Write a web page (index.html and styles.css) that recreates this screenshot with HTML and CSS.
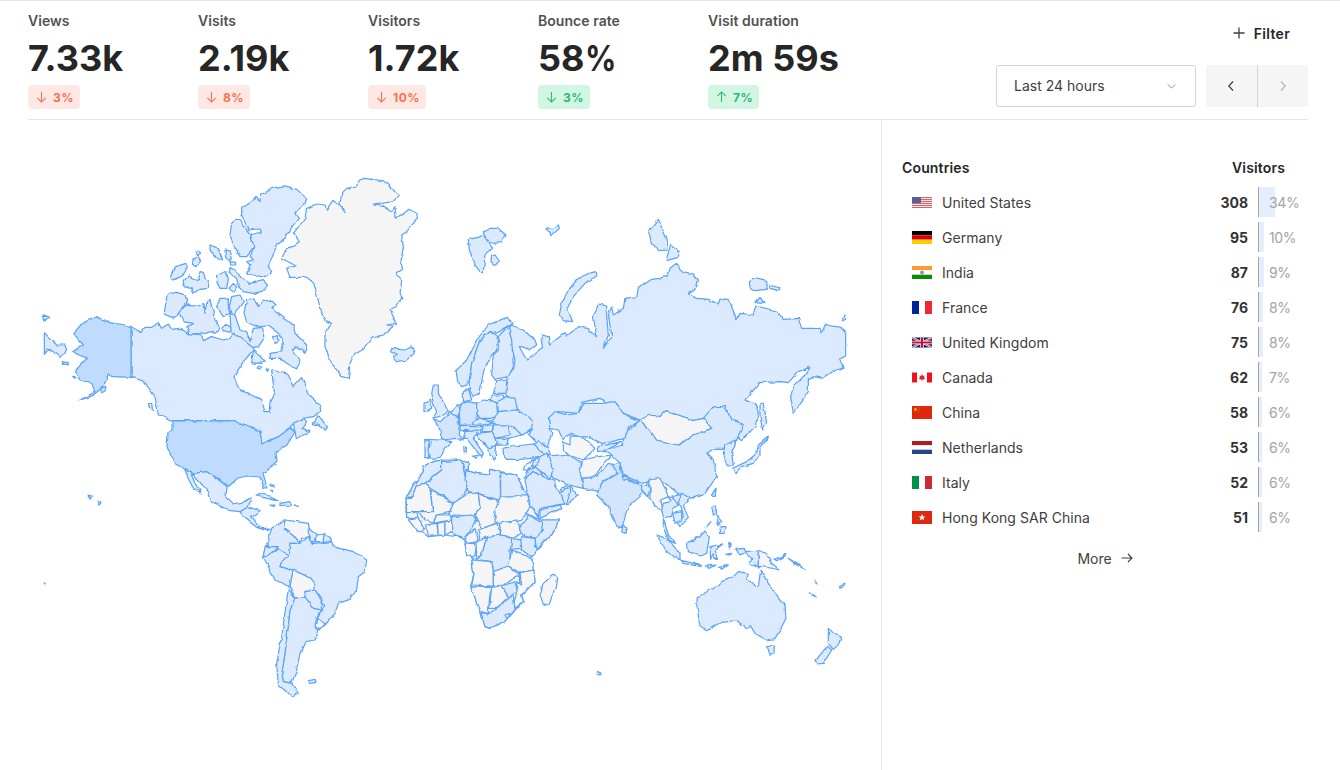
FILE: index.html
```html
<!DOCTYPE html>
<html lang="en">
<head>
<meta charset="utf-8">
<title>Countries</title>
<link rel="stylesheet" href="styles.css">
</head>
<body>
<header class="top">
  <div class="stats">
    <div class="stat"><div class="label">Views</div><div class="value">7.33k</div>
      <div class="badge bad"><svg class="arr" viewBox="0 0 12 14"><path d="M6 1.5V12.500M1.500 8L6 12.500 10.500 8"/></svg>3%</div></div>
    <div class="stat"><div class="label">Visits</div><div class="value">2.19k</div>
      <div class="badge bad"><svg class="arr" viewBox="0 0 12 14"><path d="M6 1.5V12.500M1.500 8L6 12.500 10.500 8"/></svg>8%</div></div>
    <div class="stat"><div class="label">Visitors</div><div class="value">1.72k</div>
      <div class="badge bad"><svg class="arr" viewBox="0 0 12 14"><path d="M6 1.5V12.500M1.500 8L6 12.500 10.500 8"/></svg>10%</div></div>
    <div class="stat"><div class="label">Bounce rate</div><div class="value">58<span class="sign">%</span></div>
      <div class="badge good"><svg class="arr" viewBox="0 0 12 14"><path d="M6 1.5V12.500M1.500 8L6 12.500 10.500 8"/></svg>3%</div></div>
    <div class="stat"><div class="label">Visit duration</div><div class="value">2m 59s</div>
      <div class="badge good"><svg class="arr" viewBox="0 0 12 14"><path d="M6 12.500V1.500M1.500 6L6 1.500 10.500 6"/></svg>7%</div></div>
  </div>
  <div class="controls">
    <div class="filter"><svg class="plus" viewBox="0 0 12 12"><path d="M6 .5V11.500M.5 6H11.500"/></svg>Filter</div>
    <div class="range">
      <div class="select"><span class="seltext">Last 24 hours</span><svg class="caret" viewBox="0 0 10 6"><path d="M.5 .5L5 5 9.5 .5"/></svg></div>
      <div class="nav">
        <div class="navbtn"><svg class="chev" viewBox="0 0 6 10"><path d="M5 .5L.8 5 5 9.5"/></svg></div>
        <div class="navbtn off"><svg class="chev" viewBox="0 0 6 10"><path d="M1 .5L5.200 5 1 9.5"/></svg></div>
      </div>
    </div>
  </div>
</header>
<main class="main">
  <section class="mapwrap">
    <svg class="map" viewBox="28 120 853 650" aria-label="World map">
      <defs>
        <filter id="rough" filterUnits="userSpaceOnUse" x="28" y="120" width="853" height="650" color-interpolation-filters="sRGB">
          <feTurbulence type="fractalNoise" baseFrequency=".13" numOctaves="2" seed="4" result="n"/>
          <feDisplacementMap in="SourceGraphic" in2="n" scale="3.500" xChannelSelector="R" yChannelSelector="G"/>
        </filter>
      </defs>
      <g filter="url(#rough)">
      <!-- North America, Greenland -->
      <g transform="translate(30 170) scale(.33333)">
        <polygon class="c0" points="1000,25 1060,32 1105,75 1090,95 1030,105 1065,110 1085,125 1095,110 1098,145 1135,118 1160,128 1162,145 1130,185 1115,195 1120,230 1112,280 1118,298 1100,310 1115,330 1110,370 1115,385 1095,410 1080,420 1100,460 1070,465 1090,468 1060,495 1025,505 1000,535 975,550 960,580 955,625 935,620 905,580 885,530 885,490 905,460 885,452 875,430 850,335 830,322 780,322 770,295 798,288 755,265 765,245 808,215 790,190 825,145 830,115 860,102 885,105 890,118 908,92 930,105 945,128 930,100 935,70 950,55 980,48 985,35"/>
        <polygon class="c1" points="1085,535 1105,538 1125,540 1145,530 1153,550 1130,570 1100,575 1090,565 1100,555 1082,545"/>
        <polygon class="c1" points="692,75 730,55 760,47 800,58 830,85 825,105 795,130 805,145 780,180 765,205 740,222 735,240 715,290 725,305 705,322 670,315 650,310 660,285 650,275 670,270 660,258 675,230 660,195 695,185 690,177 655,180 635,135 635,115 665,95 680,80 690,95"/>
        <polygon class="c1" points="615,148 630,148 640,170 660,190 668,215 675,230 650,260 630,260 615,235 600,195 605,160"/>
        <polygon class="c1" points="540,225 565,235 578,270 555,258 540,240"/>
        <polygon class="c1" points="585,240 600,243 607,265 597,272 587,262"/>
        <polygon class="c1" points="600,275 617,277 617,285 602,285"/>
        <polygon class="c1" points="495,245 505,240 512,250 500,257"/>
        <polygon class="c1" points="490,268 505,263 512,275 498,287 487,280"/>
        <polygon class="c1" points="437,290 468,280 468,300 455,322 430,332 423,325"/>
        <polygon class="c1" points="475,317 490,325 505,330 510,308 520,310 525,325 538,330 535,355 510,358 488,370 483,355 462,350 460,335"/>
        <polygon class="c1" points="560,315 585,308 595,325 590,355 570,355 560,335"/>
        <polygon class="c1" points="610,340 620,352 608,365 597,355"/>
        <polygon class="c1" points="600,293 615,300 635,325 660,340 700,332 712,345 705,362 670,370 640,365 625,350 620,325 597,310"/>
        <polygon class="c1" points="412,372 440,367 465,375 470,392 440,440 430,447 403,430 408,395"/>
        <polygon class="c1" points="448,430 470,400 480,407 505,408 522,400 525,430 530,395 540,390 548,420 555,450 570,470 560,490 530,485 510,490 480,492 470,470 490,460 460,455"/>
        <polygon class="c1" points="570,385 595,385 595,410 600,430 580,440 560,410"/>
        <polygon class="c1" points="605,380 630,375 640,395 625,415 605,435 598,410"/>
        <polygon class="c1" points="590,463 605,475 600,490 580,485 578,475"/>
        <polygon class="c1" points="650,388 670,385 685,410 700,390 725,395 735,405 722,415 750,435 790,465 795,490 830,525 825,550 800,530 790,540 810,570 800,597 770,580 750,565 722,565 720,550 755,545 760,520 745,490 715,468 680,470 650,455 642,430"/>
        <polygon class="c1" points="670,540 680,550 705,573 680,580 665,578"/>
        <polygon class="c1" points="685,588 697,588 690,597 682,595"/>
        <polygon class="c1" points="708,597 716,597 712,604"/>
        <polygon class="c1" points="728,500 742,498 744,515 732,520"/>
        <polygon class="c1" points="600,430 615,435 630,480 650,485 660,515 670,475 698,472 702,505 685,530 665,532 640,520 610,505 603,480"/>
        <polygon class="c1" points="303,470 333,487 345,472 365,472 385,460 395,475 415,462 425,478 450,475 480,492 515,495 520,512 545,500 580,510 600,505 612,490 640,510 665,530 670,540 640,575 612,620 625,655 660,675 695,688 705,725 718,725 720,695 733,665 725,600 770,612 790,650 815,622 835,675 870,705 872,725 850,740 820,745 795,758 780,770 795,785 745,800 695,822 690,780 650,765 600,752 425,752 400,738 385,735 375,680 340,632 303,622"/>
        <polygon class="c1" points="850,760 865,735 875,750 892,770 885,778 870,768"/>
        <polygon class="c1" points="790,760 820,745 830,755 815,775 840,785 800,805 795,785"/>
        <polygon class="c1" points="355,700 365,700 368,722 358,712"/>
        <polygon class="c2" points="303,470 285,465 240,458 200,440 155,462 130,490 160,525 125,545 170,565 138,600 150,630 185,640 195,665 145,693 190,675 220,650 235,612 250,620 303,622"/>
        <polygon class="c1" points="43,488 80,525 105,525 110,540 90,565 70,545 55,540 43,553"/>
        <polygon class="c1" points="42,435 58,442 45,450"/>
        <polygon class="c1" points="97,575 115,578 118,585 98,580"/>
        <polygon class="c1" points="128,622 138,622 135,628"/>
        <polygon class="c1" points="212,658 228,652 226,662 215,668"/>
      </g>
      <polygon class="c2" points="172,421 230,421 247,425 260,432 262,444 278,437 290,428 295,432 287,445 276,452 277,461 268,470 263,473 267,488 264,488 260,477 247,476 238,478 228,487 217,478 207,472 193,473 185,469 175,463 167,447 168,433 172,430"/>
      <polygon class="c1" points="43,315 50,318 45,321"/>
      <polygon class="c1" points="88,496 92,497 90,499"/>
      <polygon class="c1" points="97,501 101,503 99,505"/>
      <polygon class="c1" points="44,583 45,583 45,584"/>
      <!-- Central and South America -->
      <g transform="translate(150 440) scale(.33333)">
        <polygon class="c1" points="105,88 130,100 170,95 200,115 232,140 228,165 250,195 275,190 303,172 295,200 270,215 240,212 185,185 175,155 130,105"/>
        <polygon class="c1" points="105,90 120,95 135,130 155,160 130,145 112,110"/>
        <polygon class="c1" points="270,215 295,200 330,215 305,232 330,265 360,268 350,272 320,262 280,230"/>
        <polygon class="c1" points="318,168 340,160 390,185 365,178"/>
        <polygon class="c1" points="390,190 420,185 425,195 390,197"/>
        <polygon class="c1" points="362,195 375,195 372,200"/>
        <polygon class="c1" points="435,195 445,195 445,199"/>
        <polygon class="c1" points="358,135 370,135 368,140"/>
        <polygon class="c1" points="362,150 368,152 365,156"/>
        <polygon class="c1" points="475,722 495,718 498,728 478,730"/>
        <polygon class="c0" points="405,240 440,245 475,250 480,270 475,290 455,295 450,310 430,285 400,265"/>
        <polygon class="c1" points="475,265 500,285 490,310 475,290"/>
        <polygon class="c0" points="497,285 522,282 520,303 497,305"/>
        <polygon class="c1" points="522,282 540,292 545,300 520,305"/>
        <polygon class="c1" points="405,240 400,265 430,285 450,310 420,310 415,345 385,330 350,315 365,265"/>
        <polygon class="c1" points="345,320 385,320 350,350 340,345"/>
        <polygon class="c1" points="350,350 385,325 415,345 395,365 390,380 430,390 420,440 375,420 340,350"/>
        <polygon class="c1" points="420,310 450,310 475,290 490,310 545,305 550,320 610,335 650,360 645,395 625,410 620,450 600,478 565,490 555,520 525,555 500,535 525,495 495,450 480,415 430,390 390,380 395,365 415,345"/>
        <polygon class="c0" points="430,388 480,415 495,435 495,450 465,455 465,470 435,475 420,440"/>
        <polygon class="c1" points="465,455 495,450 520,490 510,510 490,505 465,475"/>
        <polygon class="c0" points="500,535 527,552 510,570 495,560"/>
        <polygon class="c1" points="435,475 465,470 490,505 510,510 500,535 495,560 505,575 495,600 465,605 450,640 440,690 425,730 400,725 395,700 405,640 420,510"/>
        <polygon class="c1" points="415,445 435,475 420,510 405,640 395,700 400,725 425,730 445,760 425,768 385,735 380,670 395,590"/>
      </g>
      <!-- Eurasia -->
      <g transform="translate(430 200) scale(.33333)">
        <polygon class="c1" points="115,118 145,112 160,105 188,145 165,165 160,215 150,215 135,195 118,150"/>
        <polygon class="c1" points="160,95 180,85 205,85 228,105 215,128 190,130 170,120"/>
        <polygon class="c1" points="185,168 195,165 208,183 195,195 183,185"/>
        <polygon class="c1" points="345,85 375,82 385,75 388,85 365,107 358,95"/>
        <polygon class="c1" points="500,215 500,228 465,250 430,290 412,325 428,365 400,362 388,345 395,310 415,270 445,235 480,218"/>
        <polygon class="c1" points="655,95 685,58 712,120 712,150 690,152 665,130"/>
        <polygon class="c1" points="722,133 748,155 745,172 708,182"/>
        <polygon class="c1" points="958,245 975,235 1010,245 1012,268 975,272 960,262"/>
        <polygon class="c1" points="1018,255 1050,265 1040,272 1020,265"/>
        <polygon class="c1" points="978,305 990,292 1002,308"/>
        <polygon class="c1" points="1237,355 1245,345 1247,358 1240,362"/>
        <polygon class="c1" points="240,378 280,390 315,420 320,435 300,450 275,440 268,440 290,480 320,455 340,440 335,405 355,410 358,435 405,398 410,408 445,380 470,385 500,410 490,350 505,312 530,318 530,345 535,405 520,445 545,410 535,345 545,318 550,345 580,325 585,295 620,290 625,265 665,238 690,235 715,225 720,205 740,190 760,215 790,222 805,240 800,260 775,285 800,295 835,298 865,312 870,297 895,302 905,320 920,358 930,340 970,345 978,318 1040,333 1060,358 1105,355 1115,385 1170,385 1175,400 1185,375 1235,382 1247,395 1247,465 1228,475 1242,505 1215,510 1180,535 1150,530 1135,540 1135,575 1110,610 1090,642 1082,590 1090,560 1125,525 1140,502 1105,515 1075,548 1050,545 990,548 945,600 975,612 985,640 975,680 935,722 920,710 940,672 905,660 885,620 850,620 835,655 820,655 790,662 745,645 705,635 690,650 630,660 580,640 555,608 530,615 510,595 455,607 445,640 385,635 355,655 365,700 352,742 322,730 295,702 305,690 280,695 250,665 235,640 250,610 225,575 235,540 225,530 250,510 255,480 240,420"/>
        <polygon class="c1" points="990,610 1000,610 1010,665 998,690 990,650"/>
        <polygon class="c1" points="985,735 1015,710 1012,720 990,740 990,770 970,790 935,800 915,820 908,805 950,785 980,760"/>
        <polygon class="c1" points="75,515 110,480 140,420 175,375 230,352 250,375 235,378 200,400 180,395 150,420 125,490 120,540 110,555 95,560 80,545"/>
        <polygon class="c1" points="125,490 150,420 180,395 202,410 200,450 185,465 160,515 150,580 130,590 118,570 118,540"/>
        <polygon class="c1" points="205,410 235,378 245,420 250,500 235,530 195,538 185,525 190,465 205,450"/>
        <polygon class="c1b" points="630,660 660,690 680,720 745,735 790,705 845,685 820,655 850,620 885,620 905,660 940,672 920,720 880,745 855,745 830,760 850,780 860,830 825,880 780,895 750,885 700,845 680,840 635,850 580,825 570,790 540,760 520,750 580,735 580,700 610,680"/>
        <polygon class="c0" points="630,660 660,645 690,650 705,635 745,645 790,662 820,655 845,685 790,705 745,735 680,720 660,690"/>
        <polygon class="c1" points="885,735 920,720 905,760 910,795 890,795 880,760"/>
        <polygon class="c1" points="845,885 858,865 855,890"/>
      </g>
      <!-- Central and South Asia -->
      <g transform="translate(540 400) scale(.33333)">
        <polygon class="c1" points="25,55 45,35 80,45 115,40 130,10 185,10 225,5 250,40 298,62 265,85 255,115 215,125 185,130 155,115 90,100 70,120 55,90 30,85"/>
        <polygon class="c0" points="70,125 90,135 90,105 125,110 165,145 130,180 85,165 70,150"/>
        <polygon class="c1" points="5,155 40,170 85,165 120,185 125,235 130,265 85,255 40,235 15,195"/>
        <polygon class="c0" points="125,180 175,170 215,165 190,190 165,230 125,235 118,210"/>
        <polygon class="c1" points="125,235 170,230 205,190 225,195 240,220 185,245 180,275 130,265"/>
        <polygon class="c1" points="175,140 245,125 200,150 170,155"/>
        <polygon class="c3" points="215,195 240,190 245,225 300,255 325,260 330,235 300,290 265,320 245,385 230,375 205,320 170,285 185,250 235,220"/>
        <polygon class="c1" points="248,228 290,250 300,250 250,240"/>
        <polygon class="c1" points="250,375 258,385 255,400 245,395"/>
        <polygon class="c1" points="305,255 330,262 325,290 305,270"/>
        <polygon class="c0" points="330,240 360,235 375,265 385,290 362,300 370,335 345,320 330,295"/>
        <polygon class="c1" points="65,265 90,255 112,285 85,310 60,315"/>
        <polygon class="c1" points="0,330 60,315 65,325 0,355"/>
      </g>
      <!-- Africa and Arabia -->
      <g transform="translate(400 460) scale(.33333)">
        <polygon class="c0" points="100,5 125,0 185,0 205,5 205,30 200,32 230,40 265,45 270,28 300,35 350,45 380,108 390,140 420,180 475,180 465,210 410,270 395,290 400,330 405,365 365,405 370,425 345,450 320,480 270,505 255,500 243,458 212,378 222,345 215,300 195,250 195,235 170,230 135,225 85,230 65,215 45,205 18,160 18,115 40,75 70,35 70,20"/>
        <polygon class="c1" points="100,5 125,0 125,30 75,70 50,75 35,115 18,115 40,75 70,35 70,20"/>
        <polygon class="c1" points="125,5 185,0 195,45 205,65 198,95 165,130 90,85 75,70 125,30"/>
        <polygon class="c1" points="185,0 205,5 205,25 195,45"/>
        <polygon class="c1" points="198,32 230,40 265,45 270,28 300,35 302,122 235,100 205,95 195,60"/>
        <polygon class="c1" points="302,38 350,45 380,108 302,108"/>
        <polygon class="c0" points="18,115 35,115 50,75 75,70 90,85 98,155 50,155 25,155 22,170 20,155"/>
        <polygon class="c0" points="92,87 160,130 160,155 110,165 100,190 75,180 55,155 98,155"/>
        <polygon class="c0" points="160,130 210,97 235,100 240,140 225,168 165,165 145,168"/>
        <polygon class="c0" points="235,100 295,125 290,155 282,170 290,190 245,205 225,168 240,140"/>
        <polygon class="c0" points="302,108 380,108 390,140 380,160 358,185 350,180 345,200 305,195 285,185 285,155 295,125"/>
        <polygon class="c0" points="298,190 350,180 365,215 340,235 305,225"/>
        <polygon class="c1" points="385,165 420,185 445,180 430,210 405,235 370,228 358,205"/>
        <polygon class="c1" points="425,180 475,180 465,210 410,270 405,235 430,210"/>
        <polygon class="c1" points="365,230 405,235 408,270 395,290 365,270 360,240"/>
        <polygon class="c0" points="378,160 392,140 420,180 410,175"/>
        <polygon class="c0" points="20,155 50,155 55,175 20,175"/>
        <polygon class="c0" points="25,180 55,175 75,205 65,215 45,205"/>
        <polygon class="c0" points="80,195 110,190 115,225 85,230"/>
        <polygon class="c0" points="112,190 135,185 135,225 115,225"/>
        <polygon class="c0" points="135,185 155,180 155,215 135,225"/>
        <polygon class="c0" points="100,190 110,165 150,165 155,180 125,185"/>
        <polygon class="c1" points="155,170 215,165 230,180 220,200 195,235 170,230 155,215"/>
        <polygon class="c0" points="195,235 225,205 235,240 240,245 200,250"/>
        <polygon class="c0" points="195,250 230,250 225,285 215,290 200,285"/>
        <polygon class="c0" points="228,248 260,232 245,285 230,295"/>
        <polygon class="c0" points="235,210 290,190 305,225 260,230 240,240"/>
        <polygon class="c1" points="260,232 305,225 340,238 330,270 330,300 322,340 280,335 275,305 245,300 215,295 230,295 245,285"/>
        <polygon class="c1" points="335,238 362,235 365,265 332,268"/>
        <polygon class="c0" points="335,270 395,295 400,330 360,338 325,318 330,298"/>
        <polygon class="c0" points="215,300 275,305 280,335 280,378 215,375 222,345"/>
        <polygon class="c0" points="280,335 325,318 360,345 345,350 310,375 280,378"/>
        <polygon class="c0" points="360,335 368,340 370,370 358,360"/>
        <polygon class="c0" points="360,338 402,330 405,365 365,405 370,425 345,445 340,430 355,390 350,365 365,375"/>
        <polygon class="c0" points="212,378 280,380 270,400 265,460 240,455"/>
        <polygon class="c0" points="275,382 305,378 325,410 290,445 268,445"/>
        <polygon class="c1" points="305,378 345,365 352,395 325,410"/>
        <polygon class="c1" points="243,458 265,462 290,445 320,420 340,405 345,450 320,480 270,505 255,500"/>
        <polygon class="c0" points="315,465 330,460 322,478"/>
        <polygon class="c0" points="462,342 470,352 465,385 448,432 430,437 420,405 430,370"/>
        <polygon class="c1" points="372,55 385,30 412,20 430,50 395,35"/>
        <polygon class="c1" points="375,60 395,35 430,50 460,60 480,100 505,105 495,130 420,145 415,170 385,115"/>
        <polygon class="c1" points="480,100 510,80 512,95 500,130 495,130"/>
      </g>
      <!-- Europe -->
      <g transform="translate(400 370) scale(.33333)">
        <polygon class="c1" points="175,140 150,130 185,100 230,100 270,90 352,120 365,195 325,205 320,225 290,225 265,235 245,215 230,190 195,185 178,170"/>
        <polygon class="c1" points="100,45 115,45 115,70 135,105 145,125 130,135 100,145 110,125 100,100 95,70"/>
        <polygon class="c1" points="72,100 92,88 95,115 72,125"/>
        <polygon class="c3" points="120,155 140,140 150,125 175,140 178,170 175,190 190,210 170,205 125,210 125,185 100,145"/>
        <polygon class="c1" points="75,208 125,210 155,215 135,235 120,262 90,265 78,235"/>
        <polygon class="c1" points="75,208 90,215 85,265 75,262"/>
        <polygon class="c3" points="185,100 205,95 230,100 232,150 215,165 180,165 178,125"/>
        <polygon class="c1" points="150,130 175,105 180,125 175,140"/>
        <polygon class="c1" points="190,65 205,55 215,90 190,95"/>
        <polygon class="c1" points="230,100 250,90 290,95 293,145 240,145 230,130"/>
        <polygon class="c1" points="275,75 310,75 322,90 292,95 270,90"/>
        <polygon class="c1" points="290,35 320,30 318,70 280,70"/>
        <polygon class="c1" points="292,95 320,80 345,85 352,120 295,125"/>
        <polygon class="c1" points="295,125 352,120 400,150 395,175 365,195 345,175 325,165 270,165 285,145"/>
        <polygon class="c1" points="218,155 240,145 280,155 250,165 220,165"/>
        <polygon class="c1" points="180,170 220,170 250,170 245,180 180,182"/>
        <polygon class="c1" points="250,165 285,160 275,185 245,185"/>
        <polygon class="c1" points="285,165 325,165 328,195 285,205 275,185"/>
        <polygon class="c1" points="285,205 325,205 320,225 290,225"/>
        <polygon class="c1" points="195,185 235,180 220,205 250,250 245,262 215,225 200,205 190,205"/>
        <polygon class="c1" points="220,258 240,255 232,265"/>
        <polygon class="c1" points="192,228 200,228 198,248 192,248"/>
        <polygon class="c1" points="230,190 275,185 285,205 290,225 265,235 245,215"/>
        <polygon class="c1" points="265,235 290,225 285,270 270,255"/>
        <polygon class="c1" points="310,235 345,228 400,222 430,240 440,250 420,262 360,268 320,268 310,255"/>
        <polygon class="c1" points="402,222 420,215 445,235 450,252 435,255"/>
        <polygon class="c1" points="410,265 440,250 460,300 450,325 430,310 405,290"/>
        <polygon class="c1" points="395,270 420,262 412,285 398,292"/>
        <polygon class="c0" points="370,300 375,285 405,268 400,282 385,300"/>
      </g>
      <!-- South East Asia and Pacific -->
      <g transform="translate(650 470) scale(.33333)">
        <polygon class="c1" points="40,100 60,95 55,80 80,90 85,105 70,115 65,140 40,140 35,120"/>
        <polygon class="c1" points="65,78 90,70 100,100 85,105"/>
        <polygon class="c1" points="95,70 120,85 100,105 115,145 90,170 80,155 100,140 95,115 85,95"/>
        <polygon class="c1" points="68,130 95,125 95,150 75,160"/>
        <polygon class="c1" points="40,145 55,195 75,220 60,215 40,175"/>
        <polygon class="c1" points="20,195 50,205 90,250 90,270 50,245"/>
        <polygon class="c1" points="90,270 130,280 155,290 100,280"/>
        <polygon class="c1" points="112,218 150,200 165,183 178,200 170,250 150,258 115,245"/>
        <polygon class="c1" points="180,230 218,222 195,240 205,265 195,265 188,250 182,268"/>
        <polygon class="c1" points="185,110 195,105 200,130 190,135"/>
        <polygon class="c1" points="200,135 215,155 205,165"/>
        <polygon class="c1" points="210,170 228,170 225,190 212,190"/>
        <polygon class="c1" points="165,173 183,155 175,165"/>
        <polygon class="c1" points="185,75 198,55 195,78 188,80"/>
        <polygon class="c1" points="258,238 280,235 285,248 270,255"/>
        <polygon class="c1" points="285,245 325,240 325,290 300,285 305,265"/>
        <polygon class="c0" points="325,240 345,250 365,280 390,300 340,290 325,290"/>
        <polygon class="c1" points="372,268 395,260 405,250 400,262 380,272"/>
        <polygon class="c1" points="415,265 440,280 465,298 440,285"/>
        <polygon class="c1" points="495,328 502,342 498,340"/>
        <polygon class="c1" points="478,368 498,383 490,380"/>
        <polygon class="c1" points="568,350 585,340 582,350 570,355"/>
        <polygon class="c1" points="165,288 200,285 180,295"/>
        <polygon class="c1" points="208,292 232,285 215,298"/>
        <polygon class="c1" points="225,253 245,250 240,255"/>
        <polygon class="c1" points="236,218 244,225 238,235"/>
      </g>
      <!-- Oceania -->
      <g transform="translate(400 440) scale(.33333)">
        <polygon class="c1" points="892,470 950,440 965,425 1000,410 1015,395 1045,400 1040,420 1075,440 1082,392 1105,430 1130,465 1155,495 1158,535 1140,570 1125,595 1100,600 1065,580 1050,555 1040,565 1010,542 960,548 920,572 900,560 890,495"/>
        <polygon class="c1" points="1100,620 1123,618 1122,640 1110,643"/>
        <polygon class="c1" points="1285,565 1300,578 1325,592 1320,610 1300,628 1285,610"/>
        <polygon class="c1" points="1285,620 1295,630 1270,670 1250,672 1245,660"/>
        <polygon class="c1" points="592,695 605,698 600,705 592,703"/>
      </g>
      </g>
    </svg>
  </section>
  <aside class="side">
    <div class="head"><span>Countries</span><span class="head-v">Visitors</span></div>
    <ul class="rows">
      <li class="row"><svg class="flag" viewBox="0 0 20 11"><rect width="20" height="11" fill="#f6e6e6"/><path fill="#d4656c" d="M0 0h20v1H0zM0 2h20v1H0zM0 4h20v1H0zM0 6h20v1H0zM0 8h20v1H0zM0 10h20v1H0z"/><rect width="9" height="6" fill="#5a5f96"/></svg><span class="name">United States</span><span class="num">308</span><span class="barcell"><span class="bar" style="width:16px"></span><span class="pct">34%</span></span></li>
      <li class="row"><svg class="flag" viewBox="0 0 20 13"><rect width="20" height="4.300" fill="#000"/><rect y="4.300" width="20" height="4.400" fill="#d00"/><rect y="8.700" width="20" height="4.300" fill="#ffce00"/></svg><span class="name">Germany</span><span class="num">95</span><span class="barcell"><span class="bar" style="width:5px"></span><span class="pct">10%</span></span></li>
      <li class="row"><svg class="flag" viewBox="0 0 20 13"><rect width="20" height="4.300" fill="#f93"/><rect y="4.300" width="20" height="4.400" fill="#fff"/><rect y="8.700" width="20" height="4.300" fill="#128807"/><circle cx="10" cy="6.500" r="2" fill="#8a94b8"/></svg><span class="name">India</span><span class="num">87</span><span class="barcell"><span class="bar" style="width:5px"></span><span class="pct">9%</span></span></li>
      <li class="row"><svg class="flag" viewBox="0 0 20 13"><rect width="7" height="13" fill="#002395"/><rect x="7" width="6" height="13" fill="#fff"/><rect x="13" width="7" height="13" fill="#ed2939"/></svg><span class="name">France</span><span class="num">76</span><span class="barcell"><span class="bar" style="width:4px"></span><span class="pct">8%</span></span></li>
      <li class="row"><svg class="flag" viewBox="0 0 20 10"><rect width="20" height="10" fill="#012169"/><path stroke="#fff" stroke-width="2" d="M0 0L20 10M20 0L0 10"/><path stroke="#c8102e" stroke-width=".8" d="M0 0L20 10M20 0L0 10"/><path stroke="#fff" stroke-width="3.400" d="M10 0V10M0 5H20"/><path stroke="#c8102e" stroke-width="2" d="M10 0V10M0 5H20"/></svg><span class="name">United Kingdom</span><span class="num">75</span><span class="barcell"><span class="bar" style="width:4px"></span><span class="pct">8%</span></span></li>
      <li class="row"><svg class="flag" viewBox="0 0 20 10"><rect width="20" height="10" fill="#fff"/><rect width="5" height="10" fill="#f01020"/><rect x="15" width="5" height="10" fill="#f01020"/><path fill="#e8202c" d="M10 1.500L11 3.500 12.500 3 12 5 13.500 5.500 11 7.300 10.300 7.300V8.500H9.700V7.300L9 7.300 6.500 5.500 8 5 7.500 3 9 3.500z"/></svg><span class="name">Canada</span><span class="num">62</span><span class="barcell"><span class="bar" style="width:3px"></span><span class="pct">7%</span></span></li>
      <li class="row"><svg class="flag" viewBox="0 0 20 13"><rect width="20" height="13" fill="#de2910"/><circle cx="3.400" cy="3.400" r="1.400" fill="#f5c400"/><circle cx="6" cy="1.600" r=".4" fill="#ffde00"/><circle cx="7" cy="3" r=".4" fill="#ffde00"/><circle cx="7" cy="4.700" r=".4" fill="#ffde00"/><circle cx="6" cy="6" r=".4" fill="#ffde00"/></svg><span class="name">China</span><span class="num">58</span><span class="barcell"><span class="bar" style="width:3px"></span><span class="pct">6%</span></span></li>
      <li class="row"><svg class="flag" viewBox="0 0 20 13"><rect width="20" height="4.300" fill="#ae1c28"/><rect y="4.300" width="20" height="4.400" fill="#fff"/><rect y="8.700" width="20" height="4.300" fill="#21468b"/></svg><span class="name">Netherlands</span><span class="num">53</span><span class="barcell"><span class="bar" style="width:3px"></span><span class="pct">6%</span></span></li>
      <li class="row"><svg class="flag" viewBox="0 0 20 13"><rect width="7" height="13" fill="#009246"/><rect x="7" width="6" height="13" fill="#fff"/><rect x="13" width="7" height="13" fill="#ce2b37"/></svg><span class="name">Italy</span><span class="num">52</span><span class="barcell"><span class="bar" style="width:3px"></span><span class="pct">6%</span></span></li>
      <li class="row"><svg class="flag" viewBox="0 0 20 13"><rect width="20" height="13" fill="#de2910"/><path fill="#fff" d="M10 2.800L10.900 5.400 13.600 5.400 11.400 7 12.200 9.600 10 8 7.800 9.600 8.600 7 6.400 5.400 9.100 5.400z"/></svg><span class="name">Hong Kong SAR China</span><span class="num">51</span><span class="barcell"><span class="bar" style="width:3px"></span><span class="pct">6%</span></span></li>
    </ul>
    <div class="more">More<svg class="morearrow" viewBox="0 0 12 10"><path d="M.5 5H11M7 1L11 5 7 9"/></svg></div>
  </aside>
</main>
</body>
</html>
```
FILE: styles.css
```css
* { box-sizing: border-box; }
html, body { margin: 0; padding: 0; }
body {
  width: 1340px;
  height: 770px;
  overflow: hidden;
  background: #fff;
  font-family: Inter, "Liberation Sans", sans-serif;
  color: #262626;
  border-top: 1px solid #e5e5e5;
}
.top {
  display: flex;
  justify-content: space-between;
  margin: 0 32px 0 28px;
  height: 119px;
  border-bottom: 1px solid #e5e5e5;
}
.stats { display: flex; padding-top: 11px; }
.stat { width: 170px; }
.label { font-size: 14px; font-weight: 600; line-height: 17px; letter-spacing: .05px; color: #525252; }
.value { font-size: 36px; font-weight: 700; line-height: 44px; margin-top: 7px; letter-spacing: .05px; color: #262626; }
.sign { display: inline-block; transform: scaleX(.86); transform-origin: left center; margin-right: -5px; }
.badge {
  display: inline-flex;
  align-items: center;
  height: 24px;
  margin-top: 5px;
  padding: 0 6px 0 8px;
  border-radius: 4px;
  font-size: 12px;
  font-weight: 700;
  letter-spacing: .5px;
}
.bad { background: #ffe7e3; color: #f8714f; }
.good { background: #d1f7e2; color: #34b27b; }
.arr { width: 11px; height: 14px; margin-right: 6px; fill: none; stroke: currentColor; stroke-width: 1.2; }
.controls { display: flex; flex-direction: column; align-items: flex-end; padding-top: 23px; }
.filter { display: flex; align-items: center; height: 18px; font-size: 14px; font-weight: 600; letter-spacing: .3px; margin-right: 18px; color: #262626; }
.plus { width: 12px; height: 12px; margin-right: 9px; fill: none; stroke: #404040; stroke-width: 1.3; }
.range { display: flex; gap: 10px; margin-top: 23px; }
.select {
  display: flex;
  align-items: center;
  justify-content: space-between;
  width: 200px;
  height: 42px;
  padding: 0 19px 0 17px;
  border: 1px solid #d4d4d4;
  border-radius: 3px;
  font-size: 14px;
  color: #404040;
}
.seltext { margin-top: -2px; }
.caret { width: 9px; height: 5px; fill: none; stroke: #8a8a8a; stroke-width: 1.1; }
.nav { display: flex; width: 102px; height: 42px; background: #f5f5f5; border-radius: 3px; }
.navbtn { flex: 1; display: flex; align-items: center; justify-content: center; }
.navbtn + .navbtn { border-left: 1px solid #d4d4d4; }
.chev { width: 6px; height: 10px; fill: none; stroke: #404040; stroke-width: 1.2; }
.off .chev { stroke: #b5b5b5; }
.main { display: flex; height: 650px; }
.mapwrap { flex: none; width: 882px; padding-left: 28px; border-right: 1px solid #e5e5e5; }
.map { display: block; width: 853px; height: 650px; }
.map polygon { stroke: #5aa2fa; stroke-width: 1.2; stroke-linejoin: round; vector-effect: non-scaling-stroke; }
.c0 { fill: #f5f5f5; }
.c1 { fill: #dbeafe; }
.c1b { fill: #d8e8fd; }
.c2 { fill: #bfdbfe; }
.c3 { fill: #d3e5fd; }
.side { flex: none; width: 458px; padding: 39px 0 0 20px; }
.head { display: flex; justify-content: space-between; width: 383px; font-size: 14px; font-weight: 600; letter-spacing: .15px; line-height: 17px; }
.rows { list-style: none; margin: 11px 0 0; padding: 0; }
.row { display: flex; align-items: center; height: 30px; margin-bottom: 5px; padding-left: 10px; font-size: 14px; }
.flag { flex: none; align-self: flex-start; width: 20px; height: 13px; margin-top: 9px; }
.name { flex: none; width: 264px; margin-left: 10px; letter-spacing: .03px; color: #404040; }
.num { flex: none; width: 42px; text-align: right; font-size: 14px; font-weight: 700; color: #333; }
.barcell { position: relative; display: block; flex: none; width: 60px; height: 30px; margin-left: 10px; border-left: 1.5px solid #a3a3a3; }
.bar { display: block; height: 30px; background: #e4eefd; }
.pct { position: absolute; left: 10px; top: 7px; color: #a3a3a3; font-size: 14px; line-height: 17px; letter-spacing: -.4px; }
.more { display: flex; align-items: center; justify-content: center; width: 406px; margin-top: 16px; height: 20px; font-size: 14px; color: #404040; }
.morearrow { width: 12px; height: 10px; margin-left: 9px; fill: none; stroke: #404040; stroke-width: 1.1; }
```
